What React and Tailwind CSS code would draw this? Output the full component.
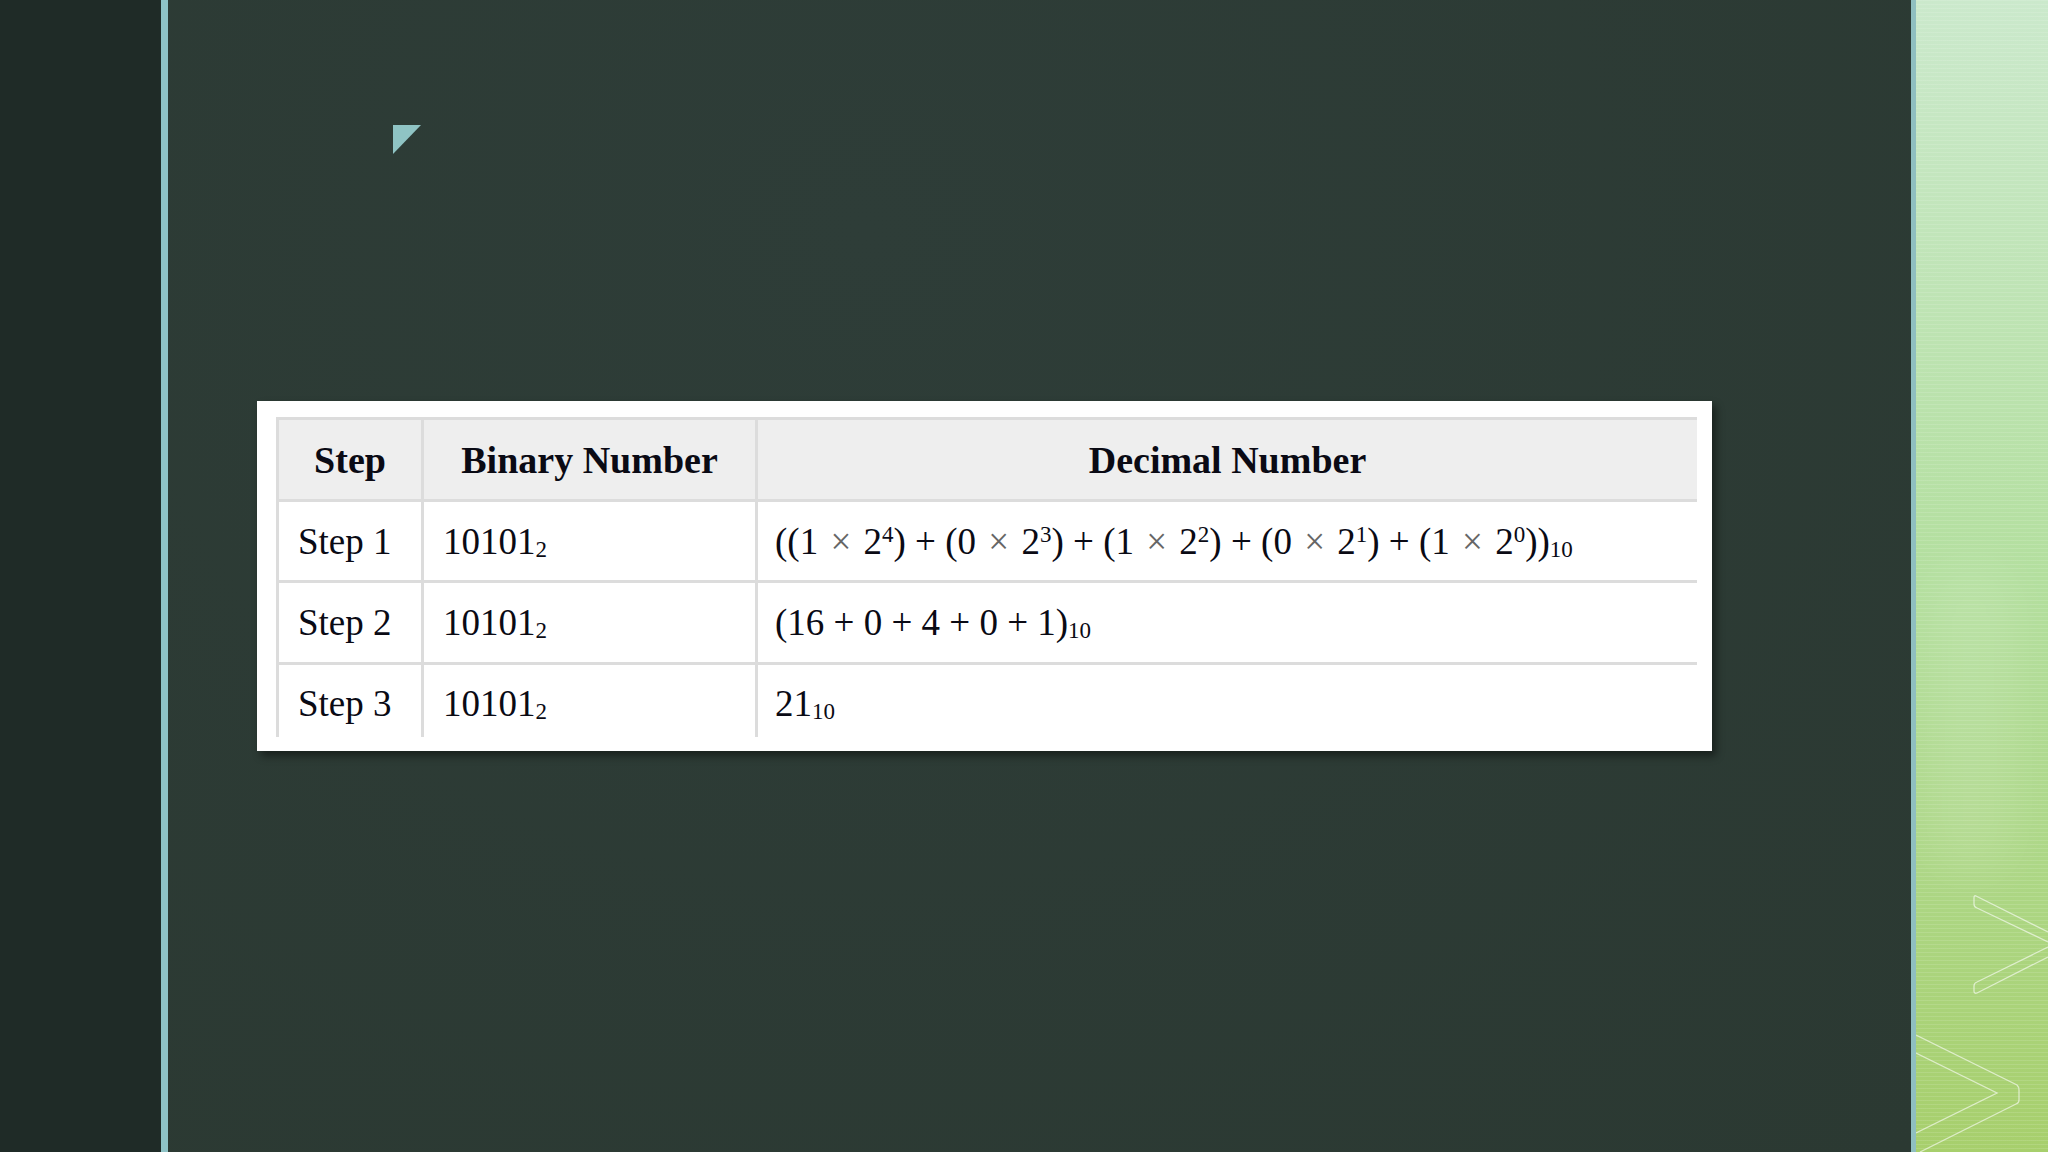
import React from 'react'

const serif = { fontFamily: '"Liberation Serif", "Times New Roman", serif' }

function Sub({ children }) {
    return <sub className="text-[23px] align-baseline relative top-[3px]">{children}</sub>
}

function Sup({ children }) {
    return <sup className="text-[23px] align-baseline relative -top-[12px]">{children}</sup>
}

function Times() {
    return <span className="text-[#666] mx-[3px]">×</span>
}

function Term({ a, p }) {
    return (
        <span>
            ({a} <Times /> 2<Sup>{p}</Sup>)
        </span>
    )
}

function StepsTable() {
    const rows = [
        {
            step: 'Step 1',
            dec: (
                <>
                    (<Term a="1" p="4" /> + <Term a="0" p="3" /> + <Term a="1" p="2" /> + <Term a="0" p="1" /> + <Term a="1" p="0" />)<Sub>10</Sub>
                </>
            ),
            h: 'h-[81px]',
        },
        {
            step: 'Step 2',
            dec: (
                <>
                    (16 + 0 + 4 + 0 + 1)<Sub>10</Sub>
                </>
            ),
            h: 'h-[82px]',
        },
        {
            step: 'Step 3',
            dec: (
                <>
                    21<Sub>10</Sub>
                </>
            ),
            h: 'h-[80px]',
        },
    ]

    return (
        <div className="h-[320px] overflow-hidden">
            <table className="w-[1421px] border-collapse text-[37px] text-[#0a0a14] leading-none" style={serif}>
                <thead>
                    <tr className="h-[82px] bg-[#eeeeee] text-[38px]">
                        <th className="w-[145px] border-[3px] border-[#dcdcdc] font-bold text-center">Step</th>
                        <th className="w-[334px] border-[3px] border-[#dcdcdc] font-bold text-center">Binary Number</th>
                        <th className="border-[3px] border-r-0 border-[#dcdcdc] font-bold text-center">Decimal Number</th>
                    </tr>
                </thead>
                <tbody>
                    {rows.map((r) => (
                        <tr key={r.step} className={r.h}>
                            <td className="border-[3px] border-[#dcdcdc] pl-[19px] whitespace-nowrap">{r.step}</td>
                            <td className="border-[3px] border-[#dcdcdc] pl-[19px]">
                                10101<Sub>2</Sub>
                            </td>
                            <td className="border-[3px] border-r-0 border-[#dcdcdc] pl-[17px] whitespace-nowrap">{r.dec}</td>
                        </tr>
                    ))}
                </tbody>
            </table>
        </div>
    )
}

function GreenPanel() {
    return (
        <div className="relative w-[132px] h-full bg-linear-to-b from-[#cbe9cc] via-[#b3df9e] to-[#a7cf6c] overflow-hidden">
            <div className="absolute inset-0 bg-[repeating-linear-gradient(180deg,rgba(255,255,255,0.12)_0px,rgba(255,255,255,0.12)_1px,transparent_1px,transparent_4px)]" />
            <div className="absolute left-[10px] top-[560px] w-[90px] h-[320px] rounded-full bg-white/10 blur-xl" />
            <svg className="absolute inset-0" width="132" height="1152" viewBox="0 0 132 1152" fill="none">
                <path
                    d="M132 932 L60 896 Q58 895 58 898 L58 904 Q58 907 61 908 L132 942 M132 947 L61 982 Q58 983 58 986 L58 991 Q58 994 61 993 L132 957"
                    stroke="rgba(255,255,255,0.6)"
                    strokeWidth="1.3"
                />
                <path
                    d="M0 1035 L101 1085 Q103 1087 103 1090 L103 1100 Q103 1103 100 1104 L4 1152 M0 1053 L81 1093 L0 1133"
                    stroke="rgba(255,255,255,0.6)"
                    strokeWidth="1.3"
                />
            </svg>
        </div>
    )
}

export default function App() {
    return (
        <div className="w-[2048px] h-[1152px] flex bg-[#2c3a34] overflow-hidden">
            <div className="w-[161px] h-full bg-[#1f2b27]" />
            <div className="w-[7px] h-full bg-[#8ec3c6]" />
            <div className="w-[1743px] h-full bg-[#2c3b35] bg-radial-[at_40%_20%] from-[#2e3d38] to-[#2b3932] flex flex-col pt-[125px]">
                <svg className="ml-[225px]" width="28" height="29" viewBox="0 0 28 29">
                    <polygon points="0,0 28,0 0,29" fill="#8fc4c4" />
                </svg>
                <div className="ml-[89px] mt-[247px] w-[1455px] h-[350px] bg-white pt-[16px] pl-[19px] shadow-[4px_5px_8px_rgba(0,0,0,0.45)]">
                    <StepsTable />
                </div>
            </div>
            <div className="w-[5px] h-full bg-[#8fbfc0]" />
            <GreenPanel />
        </div>
    )
}
